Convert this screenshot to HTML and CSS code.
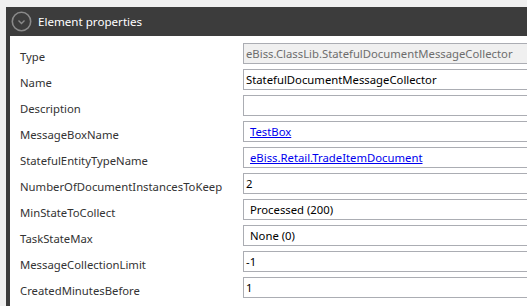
FILE: index.html
```html
<!DOCTYPE html>
<html lang="en">
<head>
    <meta charset="UTF-8">
    <title>Element properties</title>
    <link rel="stylesheet" href="styles.css">
</head>
<body>
    <div class="panel">
        <div class="panel-header">
            <svg class="toggle" width="21" height="21" viewBox="0 0 21 21">
                <circle cx="10.5" cy="10.5" r="9.2" fill="none" stroke="#8a8a8a" stroke-width="1.6"/>
                <path d="M7.5 9.5 L10.5 12.5 L13.5 9.5" fill="none" stroke="#8a8a8a" stroke-width="1.4"/>
            </svg>
            <span class="title">Element properties</span>
        </div>
        <div class="props">
            <div class="label">Type</div>
            <div class="field readonly">eBiss.ClassLib.StatefulDocumentMessageCollector</div>

            <div class="label">Name</div>
            <div class="field">StatefulDocumentMessageCollector</div>

            <div class="label">Description</div>
            <div class="field"></div>

            <div class="label">MessageBoxName</div>
            <div class="field pad"><a href="#">TestBox</a></div>

            <div class="label">StatefulEntityTypeName</div>
            <div class="field pad"><a href="#">eBiss.Retail.TradeItemDocument</a></div>

            <div class="label">NumberOfDocumentInstancesToKeep</div>
            <div class="field">2</div>

            <div class="label">MinStateToCollect</div>
            <div class="field pad">Processed (200)</div>

            <div class="label">TaskStateMax</div>
            <div class="field pad">None (0)</div>

            <div class="label">MessageCollectionLimit</div>
            <div class="field">-1</div>

            <div class="label">CreatedMinutesBefore</div>
            <div class="field">1</div>
        </div>
    </div>
</body>
</html>
```

FILE: styles.css
```css
body {
    margin: 0;
    background-color: #f0f0f0;
    font-family: "Noto Sans", "Open Sans", sans-serif;
    font-size: 11.3px;
    overflow: hidden;
}

.panel {
    margin: 7px 0 0 6px;
    border-left: 4px solid #3c3c3c;
    background-color: #fff;
    height: 299px;
    overflow: hidden;
}

.panel-header {
    display: flex;
    align-items: center;
    height: 29px;
    background-color: #3c3c3c;
    color: #fff;
    padding-left: 1px;
}

.toggle {
    margin-right: 6px;
}

.title {
    font-size: 11.6px;
}

.props {
    display: grid;
    grid-template-columns: 223px 1fr;
    grid-auto-rows: 21px;
    row-gap: 5px;
    padding: 7px 0 0 10px;
    margin-right: -20px;
}

.label {
    display: flex;
    align-items: center;
    padding-top: 5px;
    color: #333;
}

.field {
    display: flex;
    align-items: center;
    border: 1px solid #abadb3;
    padding-left: 2px;
    color: #000;
    white-space: nowrap;
}

.field.pad {
    padding-left: 6px;
}

.field.readonly {
    background-color: #f0f0f0;
    color: #6d6d6d;
}

.field a {
    color: #0000ee;
}
```
